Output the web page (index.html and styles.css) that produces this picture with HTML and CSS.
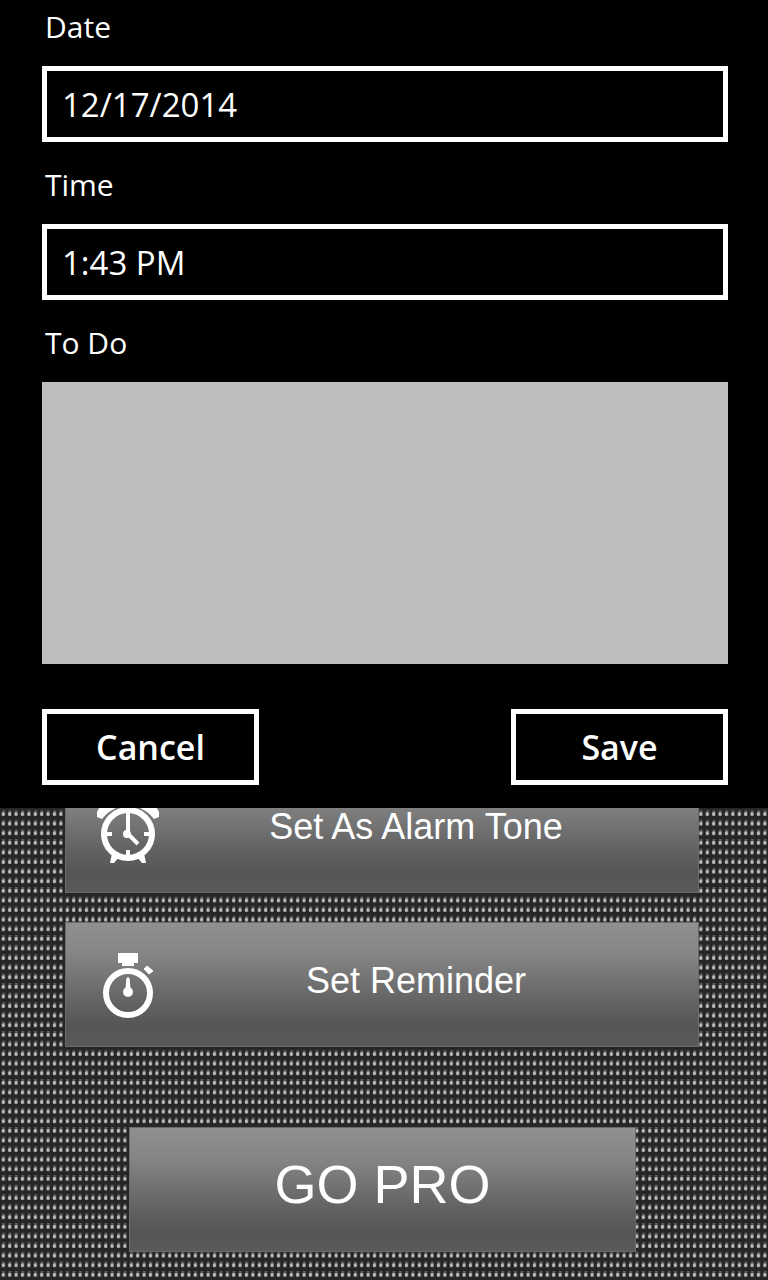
FILE: index.html
```
<!DOCTYPE html>
<html lang="en">
<head>
    <meta charset="UTF-8">
    <meta name="viewport" content="width=device-width, initial-scale=1.0">
    <title>Set Reminder</title>
    <link rel="stylesheet" href="styles.css">
</head>
<body>
    <form class="reminder-form">
        <label for="date">Date</label>
        <input type="text" id="date" name="date" value="12/17/2014">

        <label for="time">Time</label>
        <input type="text" id="time" name="time" value="1:43 PM">

        <label for="todo">To Do</label>
        <textarea id="todo" name="todo"></textarea>

        <div class="form-buttons">
            <button type="button">Cancel</button>
            <button type="submit">Save</button>
        </div>
    </form>

    <main class="options">
        <button type="button" class="option">
            <svg class="icon" viewBox="0 0 64 72" aria-hidden="true">
                <path d="M1 17Q5 7 19 7L22 12Q12 16 6 24L1 22Z" fill="#fff"/>
                <path d="M63 17Q59 7 45 7L42 12Q52 16 58 24L63 22Z" fill="#fff"/>
                <circle cx="32" cy="39" r="24" fill="none" stroke="#fff" stroke-width="6"/>
                <path d="M16 58L14 68H18L24 61ZM48 58L50 68H46L40 61Z" fill="#fff"/>
                <path d="M32 17V39L42 49" fill="none" stroke="#fff" stroke-width="4"/>
                <circle cx="31" cy="39" r="4" fill="#fff"/>
                <path d="M10 39H16M48 39H54M32 55V61" stroke="#fff" stroke-width="4"/>
            </svg>
            <span>Set As Alarm Tone</span>
        </button>
        <button type="button" class="option">
            <svg class="icon" viewBox="0 0 64 72" aria-hidden="true">
                <path d="M22 4H42V14H38V17H26V14H22Z" fill="#fff"/>
                <circle cx="32" cy="44" r="22" fill="none" stroke="#fff" stroke-width="6"/>
                <path d="M48 20L51 17L57 22L53 25Z" fill="#fff" stroke="#fff" stroke-linejoin="round"/>
                <path d="M31 29H33L34 39H30Z" fill="#fff" stroke="#fff"/>
                <circle cx="32" cy="43" r="5" fill="#fff"/>
            </svg>
            <span>Set Reminder</span>
        </button>
        <button type="button" class="go-pro">GO PRO</button>
    </main>
</body>
</html>
```
FILE: styles.css
```
* {
    box-sizing: border-box;
}

body {
    margin: 0;
    font-family: "Open Sans", "Noto Sans", sans-serif;
    color: #fff;
    /* woven dot texture, 5 x 5 dots per tile */
    background: #272627 url("data:image/svg+xml,%3Csvg xmlns='http://www.w3.org/2000/svg' width='32' height='48' viewBox='0 0 20 30'%3E%3Cdefs%3E%3Cpattern id='p' width='4' height='6' patternUnits='userSpaceOnUse'%3E%3Crect width='4' height='6' fill='%23272627'/%3E%3Crect x='1.4' y='2.4' width='1.6' height='1.6' fill='%23606060'/%3E%3Crect x='1.1' y='3.8' width='1.9' height='2' rx='.3' fill='%23c4c4c4'/%3E%3C/pattern%3E%3C/defs%3E%3Crect width='20' height='30' fill='url(%23p)'/%3E%3C/svg%3E");
}

button {
    color: #fff;
    cursor: pointer;
}

.reminder-form {
    position: relative;
    z-index: 1;
    background-color: #000;
    padding: 6px 40px 23px 42px;
}

label {
    display: block;
    font-size: 30px;
    line-height: 42px;
    margin-bottom: 18px;
    padding-left: 3px;
}

input {
    display: block;
    width: 100%;
    height: 76px;
    margin-bottom: 22px;
    padding: 0 15px;
    border: 5px solid #fff;
    border-radius: 0;
    background-color: #000;
    color: #fff;
    font-family: inherit;
    font-size: 33px;
}

textarea {
    display: block;
    width: 100%;
    height: 282px;
    padding: 16px;
    border: none;
    border-radius: 0;
    background-color: #bebebe;
    color: #000;
    font-family: inherit;
    font-size: 33px;
    resize: none;
}

.form-buttons {
    display: flex;
    justify-content: space-between;
    margin-top: 45px;
}

.form-buttons button {
    width: 217px;
    height: 76px;
    border: 5px solid #fff;
    background-color: #000;
    font-family: inherit;
    font-size: 34px;
    font-weight: 600;
}

/* the first option slides under the form */
.options {
    display: flex;
    flex-direction: column;
    gap: 29px;
    margin-top: -40px;
    padding: 0 69px 28px 65px;
}

.option,
.go-pro {
    height: 125px;
    border: 1px solid #6a6a6a;
    background: linear-gradient(#909090, #858585 25%, #606060 68%, #555 85%, #5a5a5a);
    font-family: "Liberation Sans", Arial, sans-serif;
}

.option {
    display: flex;
    align-items: center;
    padding: 0 26px 0 30px;
    font-size: 36px;
}

.option span {
    flex: 1;
    padding-bottom: 8px;
}

.icon {
    width: 64px;
    height: 72px;
}

.go-pro {
    margin: 51px 63px 0 64px;
    padding-bottom: 12px;
    font-size: 54px;
}
```
